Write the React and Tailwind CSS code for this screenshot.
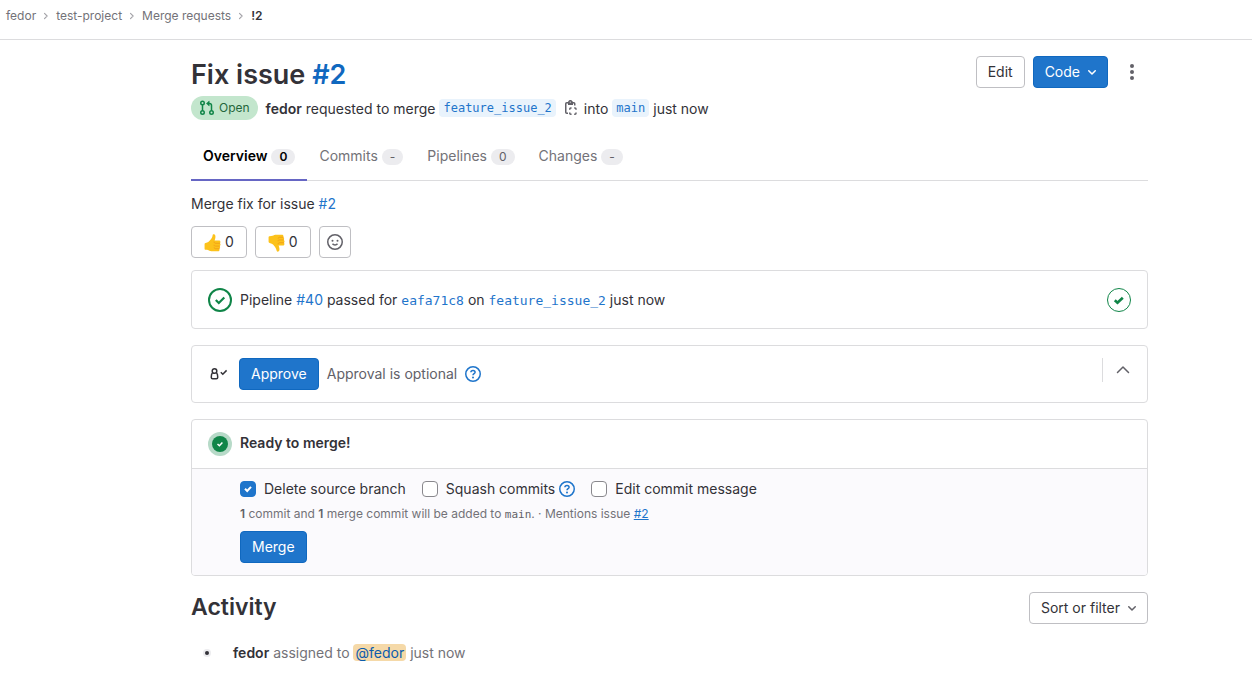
import React from "react";

function Icon({ children, className = "size-4", ...rest }) {
  return (
    <svg
      viewBox="0 0 16 16"
      fill="none"
      stroke="currentColor"
      strokeWidth="1.5"
      aria-hidden="true"
      className={`shrink-0 ${className}`}
      {...rest}
    >
      {children}
    </svg>
  );
}

function ChevronDown({ className }) {
  return (
    <Icon className={className}>
      <path d="M4.75 6.75 8 10l3.25-3.25" strokeLinecap="round" strokeLinejoin="round" />
    </Icon>
  );
}

function HelpIcon() {
  return (
    <Icon className="size-4 text-[#1f75cb]">
      <circle cx="8" cy="8" r="7.25" />
      <path d="M5.9 6.3C5.9 5.1 6.8 4.4 8 4.4s2.1.7 2.1 1.8c0 1.5-2.1 1.5-2.1 3.1" />
      <circle cx="8" cy="11.4" r="1" fill="currentColor" stroke="none" />
    </Icon>
  );
}

function ThumbIcon({ down }) {
  return (
    <svg
      viewBox="0 0 18 18"
      preserveAspectRatio="none"
      aria-hidden="true"
      className={`mt-0.5 h-[18px] w-[17px] shrink-0 ${down ? "-scale-y-100" : ""}`}
    >
      <path
        d="M.6 10.2c0-.7.4-1.1 1.1-1.2 2.3-.4 3.6-1.3 4.9-2.900 1.200-1.500 2.300-2.800 2.500-4.700C9.200.5 9.800.2 10.500.3c1.300.2 1.800 1.300 1.600 2.900-.1 1.200-.5 2.300-.9 3.300h4.700c1 0 1.500.7 1.500 1.500 0 .6-.3 1-.7 1.200.5.3.8.8.8 1.400 0 .8-.4 1.300-1 1.500.4.3.6.7.6 1.200 0 .7-.4 1.200-1 1.400.2.3.3.6.3 1 0 .9-.6 1.600-1.700 1.600H9.100c-2 0-3-.6-4.300-1.100-1-.3-2-.4-3-.4-.8 0-1.200-.4-1.200-1.100z"
        fill="#fcc21b"
      />
      <path
        d="M16.600 9.300h-4.200c-1 0-1.700-.4-1.700-1.300M16.400 12.100h-4c-1 0-1.700.1-1.700-1M16.100 14.700h-3.600c-1 0-1.600 0-1.700-1"
        fill="none"
        stroke="#f09a16"
        strokeWidth=".8"
        strokeLinecap="round"
      />
    </svg>
  );
}

function Button({ primary, className = "px-[11px]", children, ...rest }) {
  const look = primary
    ? "border-[#1068bf] bg-[#1f75cb] text-white hover:bg-[#1068bf]"
    : "border-[#bfbfc3] bg-white text-[#333238] hover:bg-[#ececef]";
  return (
    <button
      type="button"
      className={`flex h-8 items-center justify-center rounded border text-sm whitespace-nowrap ${look} ${className}`}
      {...rest}
    >
      {children}
    </button>
  );
}

const crumbs = ["fedor", "test-project", "Merge requests"];

const tabs = [
  { label: "Overview", count: "0", active: true },
  { label: "Commits", count: "-" },
  { label: "Pipelines", count: "0" },
  { label: "Changes", count: "-" },
];

function Tab({ label, count, active }) {
  return (
    <a
      href="#"
      aria-current={active ? "page" : undefined}
      className={`flex h-12 items-center gap-1 border-b-2 px-3 text-sm ${
        active ? "border-[#6666c4] font-semibold text-black" : "border-transparent text-[#737278]"
      }`}
    >
      {label}
      <span
        className={`mt-px flex h-4 items-center rounded-full bg-[#ececef] px-2 text-xs ${
          active ? "text-black" : "text-[#626168]"
        }`}
      >
        {count}
      </span>
    </a>
  );
}

function BranchChip({ children }) {
  return (
    <a
      href="#"
      className="flex h-[18px] items-center rounded bg-[#e9f3fc] px-1 font-['DejaVu_Sans_Mono',monospace] text-xs text-[#1f75cb]"
    >
      {children}
    </a>
  );
}

function Option({ id, label, defaultChecked, help }) {
  return (
    <div className="flex items-center gap-1">
      <span className="grid size-4 shrink-0">
        <input
          id={id}
          type="checkbox"
          defaultChecked={defaultChecked}
          className="peer size-4 appearance-none rounded border border-[#89888d] bg-white [grid-area:1/1] checked:border-[#1f75cb] checked:bg-[#1f75cb]"
        />
        <Icon className="pointer-events-none invisible size-4 text-white [grid-area:1/1] peer-checked:visible">
          <path d="m5 7.800 2.200 2.200L11 5.800" strokeWidth="2" />
        </Icon>
      </span>
      <label htmlFor={id} className="pl-1">
        {label}
      </label>
      {help && (
        <button type="button" aria-label="About squashing">
          <HelpIcon />
        </button>
      )}
    </div>
  );
}

const link = "text-[#1f75cb] hover:underline";
const mono = "font-['DejaVu_Sans_Mono',monospace] text-[13px]";

export default function App() {
  return (
    <div className="min-h-screen bg-white font-[Inter,'Liberation_Sans',sans-serif] text-sm leading-5 text-[#333238]">
      <nav aria-label="Breadcrumbs" className="border-b border-[#dcdcde] px-1.5 pt-2 pb-[15px]">
        <ol className="flex items-center gap-1 text-xs leading-4 text-[#737278]">
          {crumbs.map((c) => (
            <li key={c} className="flex items-center gap-1">
              <a href="#">{c}</a>
              <Icon className="size-3 text-[#a4a3a8]">
                <path d="m6 4.500 3.500 3.500L6 11.500" strokeLinecap="round" strokeLinejoin="round" />
              </Icon>
            </li>
          ))}
          <li>
            <a href="#" className="font-semibold text-[#333238]">
              !2
            </a>
          </li>
        </ol>
      </nav>

      <main className="pr-[104px] pl-[191px]">
        <header className="flex items-start justify-between pt-4">
          <h1 className="text-[27px] leading-[38px] font-semibold">
            Fix issue{" "}
            <a href="#" className="text-[#1068bf]">
              #2
            </a>
          </h1>
          <div className="flex gap-2">
            <Button>Edit</Button>
            <Button primary className="gap-1 pr-[7px] pl-[11px]">
              Code
              <ChevronDown />
            </Button>
            <button type="button" aria-label="More actions" className="flex size-8 items-center justify-center text-[#626168]">
              <Icon fill="currentColor" stroke="none">
                <circle cx="8" cy="2" r="2" />
                <circle cx="8" cy="8" r="2" />
                <circle cx="8" cy="14" r="2" />
              </Icon>
            </button>
          </div>
        </header>

        <div className="mt-0.5 flex flex-wrap items-center gap-1">
          <span className="mr-1 flex h-6 items-center gap-1 rounded-full bg-[#c3e6cd] px-2 text-xs text-[#24663b]">
            <Icon className="size-4 text-[#108548]">
              <circle cx="3.500" cy="3" r="1.750" />
              <circle cx="3.500" cy="12.500" r="1.750" />
              <circle cx="12.500" cy="12.500" r="1.750" />
              <path d="M3.500 4.750v6M12.500 10.750V5.500c0-1.200-.8-2-2-2H9" />
              <path d="M10.200 1v5L7.400 3.500z" fill="currentColor" strokeWidth=".5" />
            </Icon>
            Open
          </span>
          <span className="pt-0.5">
            <strong className="font-semibold">fedor</strong> requested to merge
          </span>
          <BranchChip>feature_issue_2</BranchChip>
          <button type="button" aria-label="Copy branch name" className="ml-1 text-[#626168]">
            <Icon>
              <path d="M4.500 2.750H2.750c-.6 0-1 .4-1 1v8.500c0 .6.400 1 1 1H4M9 2.750h.750c.6 0 1 .4 1 1V5.500" />
              <path
                fill="currentColor"
                stroke="none"
                fillRule="evenodd"
                d="M6.250 0a2 2 0 0 0-1.900 1.400H4V5h5V1.400h-.6A2 2 0 0 0 6.250 0zm0 1.500a.6.6 0 1 1 0 1.200.6.6 0 0 1 0-1.200z"
              />
              <path d="M5.750 9.800V9c0-.6.400-1 1-1h.8M10.200 8h.8c.6 0 1 .4 1 1v.8M12 12.500v.8c0 .6-.4 1-1 1h-.8M7.550 14.300h-.8c-.6 0-1-.4-1-1v-.8" />
            </Icon>
          </button>
          <span className="pt-0.5">into</span>
          <BranchChip>main</BranchChip>
          <span className="pt-0.5">just now</span>
        </div>

        <nav aria-label="Merge request" className="mt-[13px] flex border-b border-[#dcdcde]">
          {tabs.map((t) => (
            <div key={t.label} className="-mb-px">
              <Tab {...t} />
            </div>
          ))}
        </nav>

        <p className="mt-3 pt-px">
          Merge fix for issue{" "}
          <a href="#" className={link}>
            #2
          </a>
        </p>

        <div className="mt-3 flex gap-2">
          <Button aria-label="Thumbs up" className="gap-1 px-3">
            <ThumbIcon />
            <span>0</span>
          </Button>
          <Button aria-label="Thumbs down" className="gap-1 px-3">
            <ThumbIcon down />
            <span>0</span>
          </Button>
          <Button aria-label="Add reaction" className="w-8">
            <Icon className="size-4 text-[#626168]">
              <circle cx="8" cy="8" r="7.250" />
              <circle cx="5.500" cy="6.750" r="1" fill="currentColor" stroke="none" />
              <circle cx="10.500" cy="6.750" r="1" fill="currentColor" stroke="none" />
              <path d="M5.500 9.750c1.200 1.500 3.800 1.500 5 0" />
            </Icon>
          </Button>
        </div>

        <section className="mt-3 flex items-center gap-2 rounded border border-[#dcdcde] px-4 pt-[17px] pb-4">
          <svg viewBox="0 0 24 24" fill="none" stroke="#108548" className="size-6 shrink-0" aria-hidden="true">
            <circle cx="12" cy="12" r="11" strokeWidth="2" />
            <path d="m7.800 12 3 3 5.500-5.500" strokeWidth="2.200" />
          </svg>
          <p className="grow">
            Pipeline{" "}
            <a href="#" className={link}>
              #40
            </a>{" "}
            passed for{" "}
            <a href="#" className={`${link} ${mono}`}>
              eafa71c8
            </a>{" "}
            on{" "}
            <a href="#" className={`${link} ${mono}`}>
              feature_issue_2
            </a>{" "}
            just now
          </p>
          <a href="#" aria-label="Pipeline stage passed">
            <svg viewBox="0 0 24 24" fill="none" stroke="#108548" className="size-6" aria-hidden="true">
              <circle cx="12" cy="12" r="11.500" />
              <path d="m7.800 12.200 2.700 2.600 5.300-5.100" strokeWidth="2.600" />
            </svg>
          </a>
        </section>

        <section className="mt-4 flex items-center gap-2 rounded border border-[#dcdcde] py-3 pr-4 pl-[15px]">
          <span className="flex size-6 items-center justify-center">
            <Icon className="size-5 text-[#333238]" viewBox="0 0 20 20">
              <circle cx="5.500" cy="7" r="2.300" />
              <path d="M3.500 8.700C2.600 9.600 2.250 10.900 2.250 13.200c0 1 .5 1.500 1.400 1.500h3.700c.9 0 1.400-.5 1.400-1.500 0-2.300-.35-3.600-1.250-4.500" />
              <path d="m11.800 8.200 2 2 3.800-3.800" />
            </Icon>
          </span>
          <Button primary>Approve</Button>
          <span className="text-[#626168]">Approval is optional</span>
          <button type="button" aria-label="About approvals">
            <HelpIcon />
          </button>
          <div className="mb-2 ml-auto flex h-6 items-center border-l border-[#dcdcde] pl-3">
            <button type="button" aria-label="Collapse" className="text-[#626168]">
              <Icon>
                <path d="m2.500 10.500 5.500-5.500L13.500 10.500" strokeLinecap="round" strokeLinejoin="round" />
              </Icon>
            </button>
          </div>
        </section>

        <section className="mt-4 overflow-hidden rounded border border-[#dcdcde]">
          <div className="flex items-center gap-2 px-4 py-3">
            <svg viewBox="0 0 24 24" className="size-6 shrink-0" aria-hidden="true">
              <circle cx="12" cy="12" r="12" fill="#b7dac8" />
              <circle cx="12" cy="12" r="8" fill="#108548" />
              <path d="m9.500 12 1.900 1.800 3-3.200" fill="none" stroke="white" strokeWidth="1.500" />
            </svg>
            <strong className="pb-0.5 font-semibold">Ready to merge!</strong>
          </div>
          <div className="border-t border-[#dcdcde] bg-[#fbfafd] pt-[10px] pr-4 pb-3 pl-12">
            <div className="flex flex-wrap gap-4">
              <Option id="delete-branch" label="Delete source branch" defaultChecked />
              <Option id="squash" label="Squash commits" help />
              <Option id="edit-message" label="Edit commit message" />
            </div>
            <p className="mt-[7px] text-xs leading-4 text-[#737278]">
              <strong className="font-semibold text-[#626168]">1</strong> commit and{" "}
              <strong className="font-semibold text-[#626168]">1</strong> merge commit will be added to{" "}
              <span className="font-['DejaVu_Sans_Mono',monospace] text-[11px] text-[#626168]">main</span>. · Mentions issue{" "}
              <a href="#" className="text-[#1f75cb] underline">
                #2
              </a>
            </p>
            <div className="mt-2 flex">
              <Button primary>Merge</Button>
            </div>
          </div>
        </section>

        <div className="mt-4 flex items-start justify-between">
          <h2 className="text-[23px] leading-[30px] font-semibold">Activity</h2>
          <Button className="gap-1 pr-[7px] pl-[11px]">
            Sort or filter
            <ChevronDown className="size-4 text-[#626168]" />
          </Button>
        </div>

        <ul className="py-4">
          <li className="flex items-center gap-2.5 py-[3px]">
            <span className="flex w-8 justify-center">
              <span className="flex size-2 items-center justify-center rounded-full bg-[#ececef]">
                <span className="size-1 rounded-full bg-[#333238]" />
              </span>
            </span>
            <p className="text-[#737278]">
              <a href="#" className="font-semibold text-[#333238]">
                fedor
              </a>{" "}
              assigned to{" "}
              <a href="#" className="rounded bg-[#f5d9a8] px-0.5 text-[#0b5cad]">
                @fedor
              </a>{" "}
              just now
            </p>
          </li>
        </ul>
      </main>
    </div>
  );
}
